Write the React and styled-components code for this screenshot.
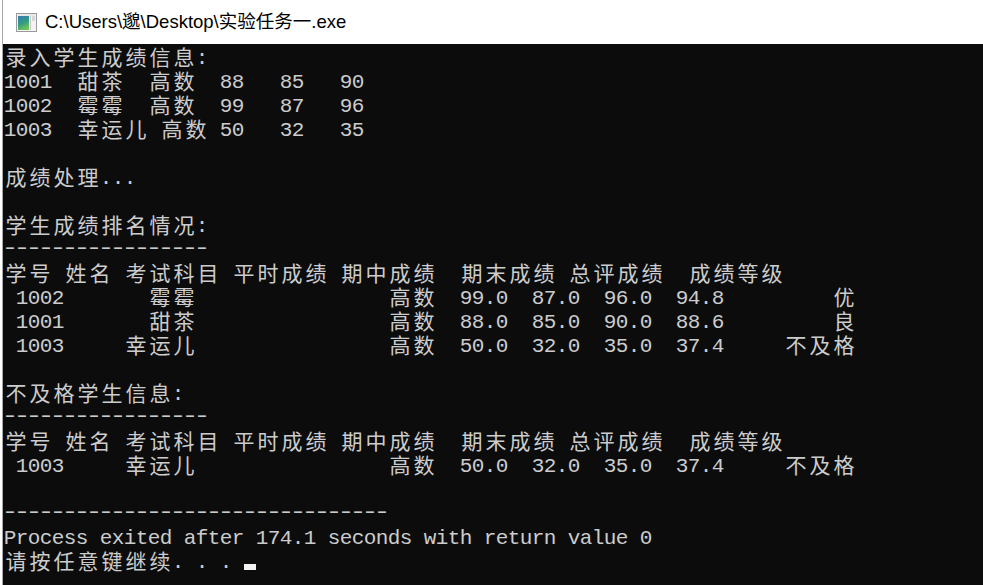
import React from 'react'
import styled, { createGlobalStyle } from 'styled-components'

const Global = createGlobalStyle`
    html, body {
        margin: 0;
        padding: 0;
        background: #ffffff;
    }
`

const Window = styled.div`
    width: 983px;
    height: 585px;
    overflow: hidden;
    display: flex;
    flex-direction: column;
    background: #ffffff;
    padding-left: 2px;
    box-sizing: border-box;
`

const Frame = styled.div`
    flex: 1;
    display: flex;
    flex-direction: column;
    border-left: 1px solid #a8a8a8;
`

const TitleBar = styled.div`
    height: 44px;
    flex-shrink: 0;
    display: flex;
    align-items: center;
    gap: 8px;
    padding-left: 13px;
    background: #ffffff;
    font-family: "Liberation Sans", "Noto Sans CJK SC", sans-serif;
    font-size: 18.5px;
    color: #000000;
`

const Title = styled.span`
    line-height: 1;
    margin-top: 1px;
`

const Console = styled.div`
    flex: 1;
    background: #0c0c0c;
    color: #cccccc;
    padding-left: 1px;
    display: flex;
    flex-direction: column;
`

const Line = styled.div`
    height: 24px;
    display: flex;
    white-space: pre;
`

const Cell = styled.span`
    display: inline-flex;
    justify-content: center;
    align-items: center;
    width: ${p => (p.$wide ? '24px' : '12px')};
    height: 24px;
    flex-shrink: 0;
    font-family: ${p => (p.$wide
        ? '"Noto Sans CJK SC", sans-serif'
        : '"Liberation Mono", monospace')};
    font-size: 21px;
    line-height: 24px;
    transform: ${p => (p.$wide
        ? 'none'
        : p.$dash ? 'translateY(1px) scaleX(1.35)' : 'translateY(3px)')};
`

const Cursor = styled.span`
    width: 12px;
    height: 24px;
    display: inline-flex;
    align-items: flex-end;
    padding-bottom: 2px;
    box-sizing: border-box;

    &::after {
        content: '';
        width: 12px;
        height: 6px;
        background: #f2f2f2;
    }
`

const isWide = ch => ch.charCodeAt(0) > 0x2e80

const width = s => [...s].reduce((n, ch) => n + (isWide(ch) ? 2 : 1), 0)

const padLeft = (s, n) => ' '.repeat(Math.max(0, n - width(s))) + s

const rankRow = (id, name, scores, total, grade) =>
    padLeft(id, 5) +
    padLeft(name, 11) +
    padLeft('高数', 20) +
    scores.map(v => padLeft(v.toFixed(1), 6)).join('') +
    padLeft(total, 6) +
    padLeft(grade, 11)

const header = '学号 姓名 考试科目 平时成绩 期中成绩  期末成绩 总评成绩  成绩等级'

const lines = [
    '录入学生成绩信息:',
    '1001  甜茶  高数  88   85   90',
    '1002  霉霉  高数  99   87   96',
    '1003  幸运儿 高数 50   32   35',
    '',
    '成绩处理...',
    '',
    '学生成绩排名情况:',
    '-'.repeat(17),
    header,
    rankRow('1002', '霉霉', [99, 87, 96], '94.8', '优'),
    rankRow('1001', '甜茶', [88, 85, 90], '88.6', '良'),
    rankRow('1003', '幸运儿', [50, 32, 35], '37.4', '不及格'),
    '',
    '不及格学生信息:',
    '-'.repeat(17),
    header,
    rankRow('1003', '幸运儿', [50, 32, 35], '37.4', '不及格'),
    '',
    '-'.repeat(32),
    'Process exited after 174.1 seconds with return value 0',
]

const TextLine = ({ text, children }) => (
    <Line>
        {[...text].map((ch, i) => (
            <Cell key={i} $wide={isWide(ch)} $dash={ch === '-'}>{ch}</Cell>
        ))}
        {children}
    </Line>
)

const AppIcon = () => (
    <svg width="21" height="19" viewBox="0 0 21 19">
        <defs>
            <linearGradient id="scr" x1="0" y1="0" x2="0.4" y2="1">
                <stop offset="0" stopColor="#3a7bb0" />
                <stop offset="0.55" stopColor="#2f9a86" />
                <stop offset="1" stopColor="#6cc05a" />
            </linearGradient>
        </defs>
        <rect x="0.5" y="0.5" width="20" height="18" fill="#f4f4f4" stroke="#9a9a9a" />
        <rect x="2" y="3" width="11" height="14" fill="url(#scr)" />
        <rect x="14" y="3" width="1" height="14" fill="#c8c8c8" />
        <rect x="16" y="3" width="3" height="5" fill="#d8d8d8" />
        <rect x="2" y="1.5" width="17" height="1" fill="#dcdcdc" />
    </svg>
)

const App = () => (
    <>
        <Global />
        <Window>
            <Frame>
                <TitleBar>
                    <AppIcon />
                    <Title>C:\Users\邈\Desktop\实验任务一.exe</Title>
                </TitleBar>
                <Console>
                    {lines.map((text, i) => (
                        <TextLine key={i} text={text} />
                    ))}
                    <TextLine text="请按任意键继续. . . ">
                        <Cursor />
                    </TextLine>
                </Console>
            </Frame>
        </Window>
    </>
)

export default App
